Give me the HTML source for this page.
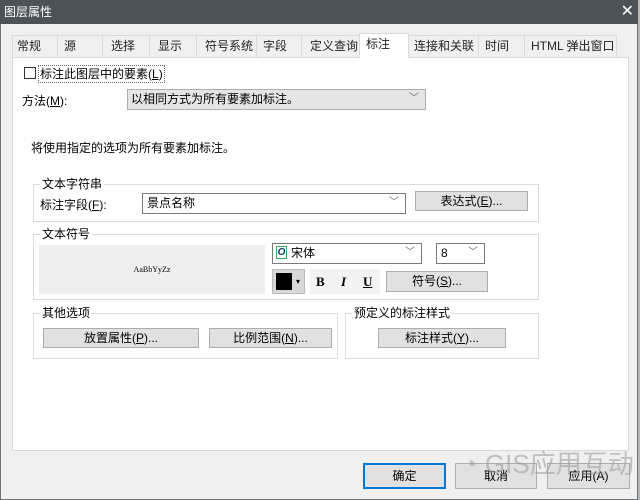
<!DOCTYPE html>
<html><head><meta charset="utf-8"><style>
*{box-sizing:border-box;margin:0;padding:0}
body{width:640px;height:500px;overflow:hidden;background:#b8b8b0;font:12px "Liberation Sans","Noto Sans CJK SC",sans-serif;color:#000;position:relative}
.a{position:absolute}
.dlg{left:0;top:0;width:638px;height:500px;background:#f0f0f0;border:1px solid #6d7378}
.title{left:0;top:0;width:638px;height:24px;background:#4b5359;color:#fff;font-size:12px;line-height:24px;padding-left:4px}
.x{right:6px;top:0;color:#fff;font-size:16px;line-height:24px}
.tab{top:35px;height:22px;border:1px solid #d9d9d9;border-bottom:none;background:#f0f0f0;line-height:20px;padding-left:4px;font-size:12px;color:#222}
.tab.sel{top:33px;height:25px;background:#fff;z-index:2;padding-left:6px}
.panel{left:12px;top:57px;width:617px;height:394px;background:#fff;border:1px solid #d9d9d9}
.btn{background:#e1e1e1;border:1px solid #adadad;text-align:center;font-size:12px;line-height:18px}
.grp{border:1px solid #dcdcdc}
.lbl{background:#fff;padding:0 2px;font-size:12px;line-height:14px}
.combo{background:#fff;border:1px solid #7a7a7a;line-height:18px;padding-left:4px}
.chev{position:absolute;right:6px;top:0;color:#666;font-size:10px}
</style></head><body>
<div class="a dlg"></div>
<div class="a title">图层属性</div><div class="a x">✕</div>
<div class="a tab" style="left:12px;width:46px">常规</div>
<div class="a tab" style="left:57px;width:46px;padding-left:6px">源</div>
<div class="a tab" style="left:102px;width:48px;padding-left:8px">选择</div>
<div class="a tab" style="left:149px;width:48px;padding-left:8px">显示</div>
<div class="a tab" style="left:196px;width:61px;padding-left:8px">符号系统</div>
<div class="a tab" style="left:256px;width:46px;padding-left:6px">字段</div>
<div class="a tab" style="left:301px;width:59px;padding-left:8px">定义查询</div>
<div class="a tab sel" style="left:359px;width:50px">标注</div>
<div class="a tab" style="left:408px;width:71px;padding-left:5px">连接和关联</div>
<div class="a tab" style="left:478px;width:47px;padding-left:6px">时间</div>
<div class="a tab" style="left:524px;width:93px;padding-left:6px">HTML 弹出窗口</div>
<div class="a panel"></div>
<div class="a" style="left:24px;top:67px;width:12px;height:12px;border:1px solid #333;background:#fff"></div>
<div class="a" style="left:38px;top:65px;line-height:16px;border:1px dotted #666;padding:0 1px">标注此图层中的要素(<u>L</u>)</div>
<div class="a" style="left:22px;top:92px">方法(<u>M</u>):</div>
<div class="a combo" style="left:127px;top:89px;width:299px;height:21px;background:#e5e5e5;border-color:#adadad;padding-left:3px">以相同方式为所有要素加标注。<span class="chev">﹀</span></div>
<div class="a" style="left:31px;top:139px">将使用指定的选项为所有要素加标注。</div>

<div class="a grp" style="left:33px;top:184px;width:506px;height:38px"></div>
<div class="a lbl" style="left:40px;top:177px">文本字符串</div>
<div class="a" style="left:40px;top:196px">标注字段(<u>F</u>):</div>
<div class="a combo" style="left:142px;top:193px;width:264px;height:21px">景点名称<span class="chev">﹀</span></div>
<div class="a btn" style="left:415px;top:191px;width:113px;height:20px">表达式(<u>E</u>)...</div>

<div class="a grp" style="left:33px;top:234px;width:506px;height:66px"></div>
<div class="a lbl" style="left:40px;top:227px">文本符号</div>
<div class="a" style="left:39px;top:245px;width:226px;height:49px;background:#efefef;text-align:center;line-height:49px;font-size:8px;font-family:'Liberation Serif',serif">AaBbYyZz</div>
<div class="a combo" style="left:272px;top:243px;width:150px;height:21px;padding-left:18px">宋体<span class="chev">﹀</span></div>
<div class="a" style="left:276px;top:246px;width:11px;height:13px;border:1px solid #3a6;color:#136;font-size:10px;font-style:italic;font-weight:bold;line-height:11px;text-align:center">O</div>
<div class="a combo" style="left:436px;top:243px;width:49px;height:21px">8<span class="chev">﹀</span></div>
<div class="a" style="left:272px;top:269px;width:33px;height:25px;background:#d8d8d8;border:1px solid #bbb"></div>
<div class="a" style="left:276px;top:273px;width:16px;height:17px;background:#000"></div>
<div class="a" style="left:296px;top:277px;font-size:8px">▾</div>
<div class="a" style="left:310px;top:269px;width:70px;height:25px;background:#f3f3f3"></div>
<div class="a" style="left:316px;top:274px;font-weight:bold;font-family:'Liberation Serif',serif;font-size:13px">B</div>
<div class="a" style="left:341px;top:274px;font-weight:bold;font-style:italic;font-family:'Liberation Serif',serif;font-size:13px">I</div>
<div class="a" style="left:363px;top:274px;font-weight:bold;text-decoration:underline;font-family:'Liberation Serif',serif;font-size:13px">U</div>
<div class="a btn" style="left:386px;top:271px;width:102px;height:21px">符号(<u>S</u>)...</div>

<div class="a grp" style="left:33px;top:313px;width:305px;height:46px"></div>
<div class="a lbl" style="left:40px;top:306px">其他选项</div>
<div class="a btn" style="left:43px;top:328px;width:156px;height:20px">放置属性(<u>P</u>)...</div>
<div class="a btn" style="left:209px;top:328px;width:123px;height:20px">比例范围(<u>N</u>)...</div>
<div class="a grp" style="left:345px;top:313px;width:194px;height:46px"></div>
<div class="a lbl" style="left:352px;top:306px">预定义的标注样式</div>
<div class="a btn" style="left:378px;top:328px;width:128px;height:20px">标注样式(<u>Y</u>)...</div>

<div class="a btn" style="left:363px;top:463px;width:83px;height:26px;line-height:22px;border:2px solid #0078d7">确定</div>
<div class="a btn" style="left:455px;top:463px;width:82px;height:26px;line-height:24px">取消</div>
<div class="a btn" style="left:547px;top:463px;width:83px;height:26px;line-height:24px">应用(A)</div>
<div class="a" style="left:462px;top:444px;font-size:26px;color:rgba(160,160,160,.6)">◔ GIS应用互动</div>
</body></html>
